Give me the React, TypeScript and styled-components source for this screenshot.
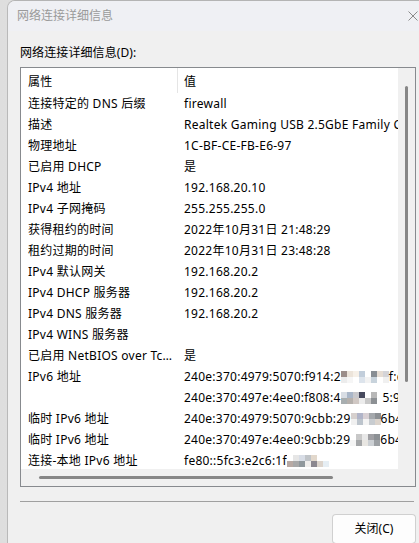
import React from "react";
import styled, { createGlobalStyle } from "styled-components";

const Global = createGlobalStyle`
  html, body { margin: 0; padding: 0; background: #e6e6e6; }
  body {
    font-family: "Noto Sans", "Noto Sans CJK SC", sans-serif;
    font-size: 12px;
    color: #000;
    overflow: hidden;
  }
`;

const Screen = styled.div`
  width: 419px;
  height: 543px;
  box-sizing: border-box;
  padding-left: 7px;
  display: flex;
  overflow: hidden;
  background: linear-gradient(to right, #dedede, #ebebeb);
`;

const Window = styled.div`
  flex: 1;
  display: flex;
  flex-direction: column;
  border-left: 1px solid #b9b9b9;
  border-top: 1px solid #b4b4b4;
  border-top-left-radius: 8px;
  overflow: hidden;
  background: #f0f0f0;
`;

const TitleBar = styled.div`
  height: 30px;
  flex: none;
  display: flex;
  align-items: center;
  justify-content: space-between;
  padding-left: 9px;
  background: #eff0f4;
`;

const Title = styled.span`
  color: #9a9a9a;
  font-size: 12px;
  line-height: 16px;
`;

const CloseX = styled.svg`
  width: 10px;
  height: 10px;
  margin-right: 1px;
`;

const Body = styled.div`
  flex: 1;
  display: flex;
  flex-direction: column;
  padding: 14px 3px 0 12px;
`;

const Label = styled.div`
  line-height: 16px;
  height: 16px;
  letter-spacing: 0.1px;
`;

const ListBox = styled.div`
  margin-top: 6px;
  height: 420px;
  box-sizing: border-box;
  border: 1px solid #878a8e;
  display: grid;
  grid-template-columns: 1fr 17px;
  grid-template-rows: 1fr 17px;
  background: #f0f0f0;
`;

const Content = styled.div`
  background: #fff;
  overflow: hidden;
  letter-spacing: 0.25px;
`;

const HeaderRow = styled.div`
  height: 25px;
  display: grid;
  grid-template-columns: 157px 1fr;
`;

const HeadCell = styled.div<{ $first?: boolean }>`
  display: flex;
  align-items: center;
  box-sizing: border-box;
  padding-left: ${(p) => (p.$first ? "7px" : "6px")};
  border-right: ${(p) => (p.$first ? "1px solid #e5e5e5" : "none")};
`;

const Row = styled.div`
  height: 21px;
  display: grid;
  grid-template-columns: 157px 1fr;
  align-items: center;
`;

const NameCell = styled.div`
  padding: 0 2px 0 7px;
  white-space: nowrap;
  overflow: hidden;
  text-overflow: ellipsis;
  line-height: 16px;
`;

const ValueCell = styled.div`
  padding-left: 6px;
  white-space: nowrap;
  overflow: hidden;
  line-height: 16px;
  display: flex;
  align-items: center;
`;

const Mosaic = styled.span<{ $cols: number }>`
  display: inline-grid;
  grid-template-columns: repeat(${(p) => p.$cols}, 6px);
  grid-template-rows: repeat(2, 6px);
  flex: none;
`;

const Cell = styled.span<{ $c: string }>`
  background: ${(p) => p.$c};
`;

const VTrack = styled.div`
  display: flex;
  justify-content: center;
  padding-top: 18px;
  background: #f0f0f0;
`;

const VThumb = styled.div`
  width: 3px;
  height: 296px;
  border-radius: 2px;
  background: #868686;
`;

const HTrack = styled.div`
  display: flex;
  align-items: center;
  padding-left: 18px;
  background: #f0f0f0;
`;

const HThumb = styled.div`
  height: 3px;
  width: 294px;
  border-radius: 2px;
  background: #868686;
`;

const Corner = styled.div`
  background: #f0f0f0;
`;

const Separator = styled.div`
  margin-top: 14px;
  margin-right: 2px;
  height: 1px;
  background: #a0a0a0;
`;

const Footer = styled.div`
  display: flex;
  justify-content: flex-end;
  margin-top: 12px;
`;

const Button = styled.button`
  width: 84px;
  height: 30px;
  border: 1px solid #d0d0d0;
  border-bottom-color: #bcbcbc;
  border-radius: 4px;
  background: #fdfdfd;
  font-family: "Noto Sans", "Noto Sans CJK SC", sans-serif;
  font-size: 12px;
  color: #000;
  padding: 0;
  line-height: 16px;
`;

type Val = { text: string; mosaic?: string[][]; tail?: string };

const m1 = [
  ["#9c8e8a", "#ece4da", "#f6f0e8", "#c2cedb", "#ffffff", "#888e94", "#e6ddd4", "#d4d4d8"],
  ["#ececec", "#f6f6f6", "#ffffff", "#dde4ec", "#f2f2f2", "#c8d3dc", "#ffffff", "#f0f0f0"],
];
const m2 = [
  ["#d8dde4", "#a9b6c8", "#c8c8cc", "#474a5e", "#ffffff", "#b8b8b8", "#ffffff"],
  ["#a8aeb0", "#b5b0ac", "#d0c8c4", "#ececec", "#c8c8c8", "#8c9094", "#ffffff"],
];
const m3 = [
  ["#d6d0ce", "#b0b4c8", "#d8d0d4", "#a4a8ac", "#8c9094"],
  ["#f0f0f0", "#bcc4cc", "#f4f4f4", "#c8ccd0", "#dcd4cc"],
];
const m4 = [
  ["#ffffff", "#c8c8c8", "#e8e8e8", "#a0a0a4", "#8c9094"],
  ["#f4f4f4", "#a4a6a8", "#e8e6e2", "#ccd0d4", "#9ca0a4"],
];
const m5 = [
  ["#ffffff", "#e6e6e6", "#d8dde6", "#c0c4c8", "#e2d8cc", "#ffffff", "#ffffff", "#ffffff", "#ffffff", "#ffffff"],
  ["#b8aaa4", "#a8a8a8", "#90989c", "#f0eeec", "#8c8890", "#dcd4cc", "#e6eef4", "#ffffff", "#ffffff", "#ffffff"],
];

const rows: [string, Val][] = [
  ["连接特定的 DNS 后缀", { text: "firewall" }],
  ["描述", { text: "Realtek Gaming USB 2.5GbE Family Controller" }],
  ["物理地址", { text: "1C-BF-CE-FB-E6-97" }],
  ["已启用 DHCP", { text: "是" }],
  ["IPv4 地址", { text: "192.168.20.10" }],
  ["IPv4 子网掩码", { text: "255.255.255.0" }],
  ["获得租约的时间", { text: "2022年10月31日 21:48:29" }],
  ["租约过期的时间", { text: "2022年10月31日 23:48:28" }],
  ["IPv4 默认网关", { text: "192.168.20.2" }],
  ["IPv4 DHCP 服务器", { text: "192.168.20.2" }],
  ["IPv4 DNS 服务器", { text: "192.168.20.2" }],
  ["IPv4 WINS 服务器", { text: "" }],
  ["已启用 NetBIOS over Tcpip", { text: "是" }],
  ["IPv6 地址", { text: "240e:370:4979:5070:f914:2", mosaic: m1, tail: "f:c" }],
  ["", { text: "240e:370:497e:4ee0:f808:4", mosaic: m2, tail: "5:9" }],
  ["临时 IPv6 地址", { text: "240e:370:4979:5070:9cbb:29", mosaic: m3, tail: "6b4:c" }],
  ["临时 IPv6 地址", { text: "240e:370:497e:4ee0:9cbb:29", mosaic: m4, tail: "6b4:c" }],
  ["连接-本地 IPv6 地址", { text: "fe80::5fc3:e2c6:1f", mosaic: m5 }],
];

function MosaicBlock({ grid }: { grid: string[][] }) {
  const cols = grid[0].length;
  return (
    <Mosaic $cols={cols}>
      {grid.map((r, ri) => r.map((c, ci) => <Cell key={ri + "-" + ci} $c={c} />))}
    </Mosaic>
  );
}

export default function App() {
  return (
    <>
      <Global />
      <Screen>
        <Window>
          <TitleBar>
            <Title>网络连接详细信息</Title>
            <CloseX viewBox="0 0 10 10">
              <path d="M0.5 0.5 L9.5 9.5 M9.5 0.5 L0.5 9.5" stroke="#8a8a8a" strokeWidth="1" fill="none" />
            </CloseX>
          </TitleBar>
          <Body>
            <Label>网络连接详细信息(D):</Label>
            <ListBox>
              <Content>
                <HeaderRow>
                  <HeadCell $first>属性</HeadCell>
                  <HeadCell>值</HeadCell>
                </HeaderRow>
                {rows.map(([name, v], i) => (
                  <Row key={i}>
                    <NameCell>{name}</NameCell>
                    <ValueCell>
                      <span>{v.text}</span>
                      {v.mosaic && <MosaicBlock grid={v.mosaic} />}
                      {v.tail && <span>{v.tail}</span>}
                    </ValueCell>
                  </Row>
                ))}
              </Content>
              <VTrack>
                <VThumb />
              </VTrack>
              <HTrack>
                <HThumb />
              </HTrack>
              <Corner />
            </ListBox>
            <Separator />
            <Footer>
              <Button>关闭(C)</Button>
            </Footer>
          </Body>
        </Window>
      </Screen>
    </>
  );
}
